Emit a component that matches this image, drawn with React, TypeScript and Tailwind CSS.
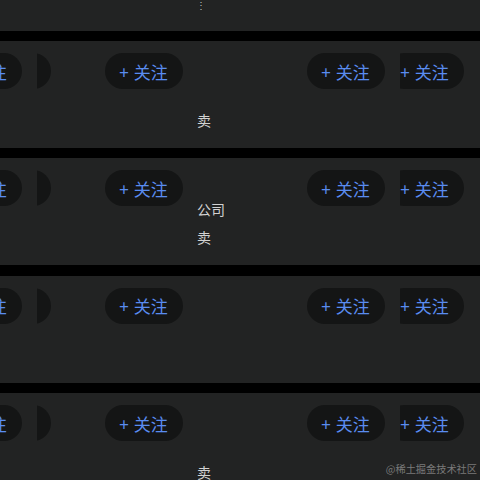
const CJK = "font-['Noto_Sans_CJK_SC','Noto_Sans',sans-serif]";

function Pill({ className = "" }: { className?: string }) {
  return (
    <div
      className={`flex h-[36px] w-[78px] shrink-0 items-center justify-center gap-[5px] rounded-full bg-[#141515] pr-[1px] text-[17px] leading-none text-[#5a8cf0] ${className}`}
    >
      <span>+</span>
      <span>关注</span>
    </div>
  );
}

type RowProps = { company?: boolean; sell?: boolean };

function Row({ company, sell }: RowProps) {
  return (
    <div className="h-[106.8px] shrink-0 overflow-hidden bg-[#222323]">
      <div className="flex items-start pt-[12px]">
        <Pill className="-ml-[56px]" />
        <div className="ml-[15px] w-[14px] shrink-0 overflow-hidden">
          <Pill className="-ml-[64px]" />
        </div>
        <Pill className="ml-[54px]" />
        <Pill className="ml-[124px]" />
        <div className="ml-[15px] w-[65px] shrink-0 overflow-hidden">
          <Pill className="-ml-[14px]" />
        </div>
      </div>
      <div className="-mt-[5px] pl-[197px] text-[14px] leading-[16px] text-[#d2d2d2]">
        <div className={company ? "" : "invisible"}>公司</div>
        <div className={`mt-[12px] ${sell ? "" : "invisible"}`}>卖</div>
      </div>
    </div>
  );
}

function Band() {
  return <div className="h-[10.5px] shrink-0 bg-black" />;
}

export default function App() {
  return (
    <div className={`relative flex h-[480px] w-[480px] flex-col overflow-hidden bg-black ${CJK}`}>
      <div className="h-[30.7px] shrink-0 bg-[#222323] pl-[196px] text-[10px] leading-[10px] text-[#bdbdbd]">
        ⋮
      </div>
      <Band />
      <Row sell />
      <Band />
      <Row company sell />
      <Band />
      <Row />
      <Band />
      <Row sell />
      <div className="absolute bottom-[4px] right-[3px] text-[10.2px] leading-[14px] text-[#7a7a7a]">
        @稀土掘金技术社区
      </div>
    </div>
  );
}
